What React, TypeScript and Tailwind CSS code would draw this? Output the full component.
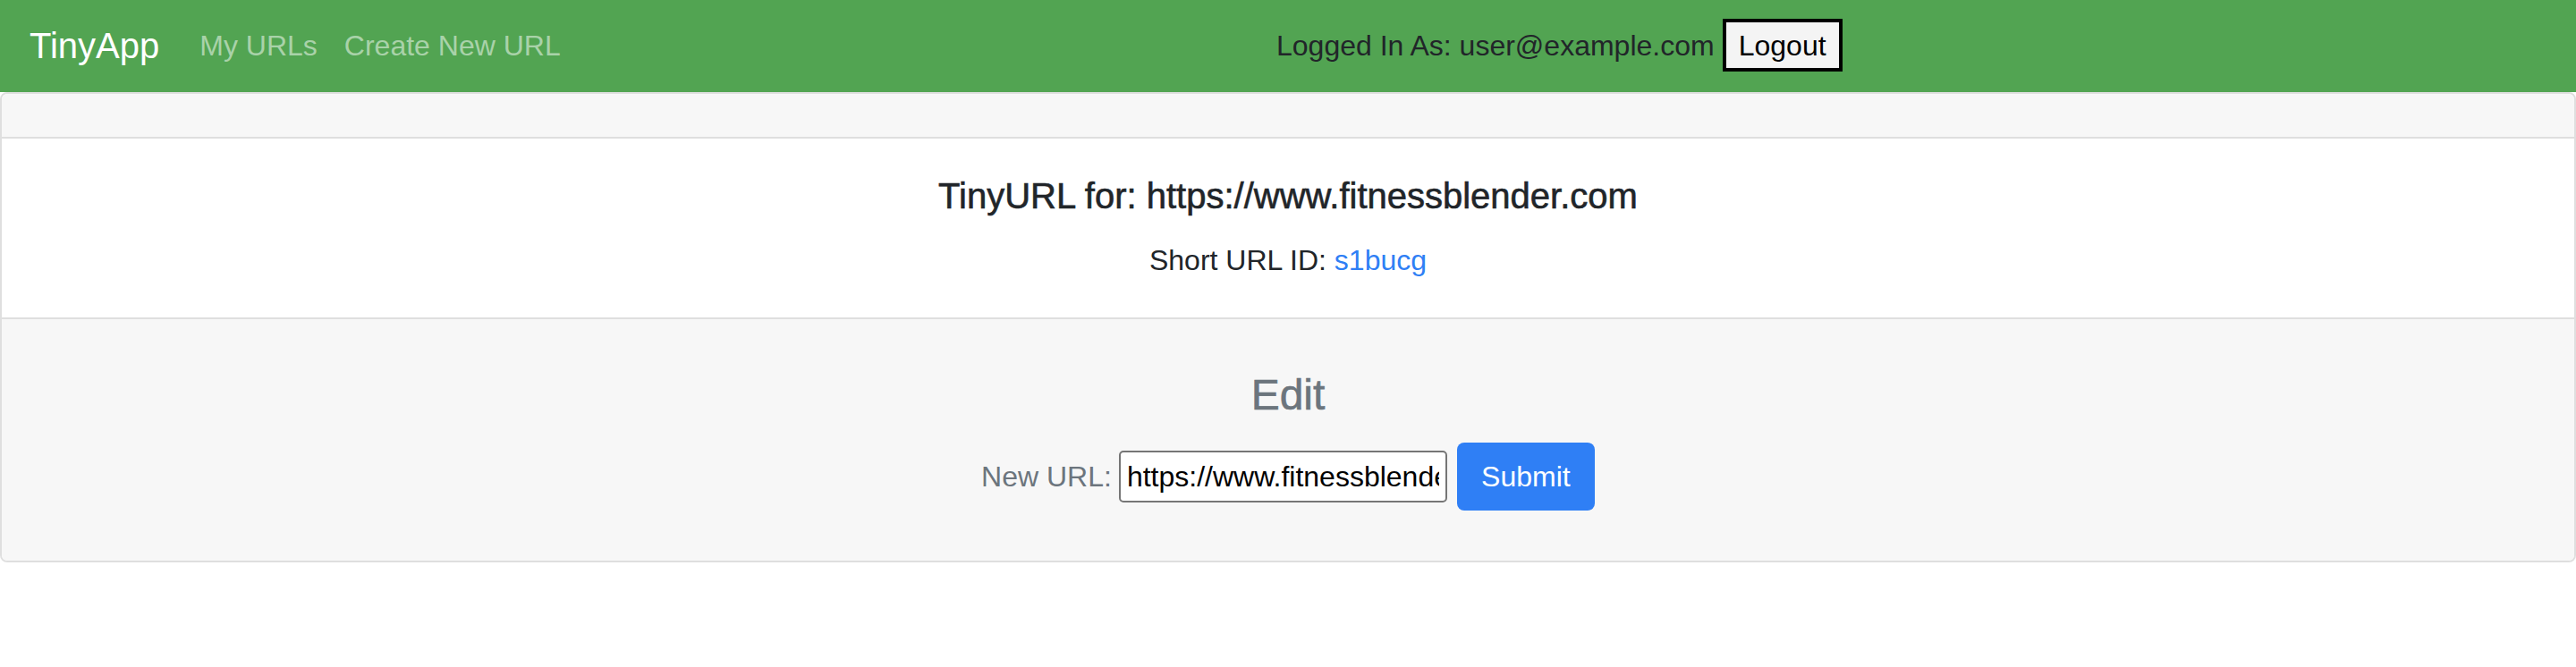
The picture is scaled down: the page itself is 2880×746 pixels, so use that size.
import React, { useState } from 'react';

const font = { fontFamily: '"Liberation Sans", Arial, sans-serif' };

const Navbar: React.FC<{ email: string }> = ({ email }) => (
  <nav className="flex h-[103px] items-center bg-[#52a452] px-[33px] pb-[2px]">
    <div className="flex w-[1394px] items-center">
      <a href="#" className="mr-[45px] text-[40px] leading-[48px] text-white">TinyApp</a>
      <a href="#" className="mr-[30px] text-[32px] leading-[48px] text-[#a9d2a9]">My URLs</a>
      <a href="#" className="text-[32px] leading-[48px] text-[#a9d2a9]">Create New URL</a>
    </div>
    <div className="flex items-center">
      <span className="mr-[9px] text-[32px] leading-[48px] text-[#212529]">Logged In As: {email}</span>
      <button className="h-[59px] w-[134px] border-[4px] border-black bg-[#f4f4f4] text-[32px] leading-none text-black">
        Logout
      </button>
    </div>
  </nav>
);

export default function App() {
  const [longUrl, setLongUrl] = useState('https://www.fitnessblender.com');

  return (
    <div className="min-h-screen bg-white text-[#212529]" style={font}>
      <Navbar email="user@example.com" />

      <div className="rounded-[8px] border-2 border-[#dfdfdf] text-center">
        {/* empty header, same as the original page */}
        <div className="h-[50px] rounded-t-[6px] border-b-2 border-[#dfdfdf] bg-[#f7f7f7]" />

        <div className="px-[40px] py-[40px]">
          <h5 className="mb-[24px] text-[40px] leading-[48px] font-medium [-webkit-text-stroke:0.6px_currentColor]">
            TinyURL for: {longUrl}
          </h5>
          <p className="text-[32px] leading-[48px]">
            Short URL ID: <a href="#" className="text-[#2f7ff5]">s1bucg</a>
          </p>
        </div>

        <div className="rounded-b-[6px] border-t-2 border-[#dfdfdf] bg-[#f7f7f7] px-[40px] py-[56px]">
          <h4 className="mb-[24px] text-[48px] leading-[58px] font-medium text-[#6c757d] [-webkit-text-stroke:0.6px_currentColor]">Edit</h4>
          <form
            className="flex items-center justify-center"
            onSubmit={(e) => e.preventDefault()}
          >
            <label className="mr-[8px] text-[32px] leading-[48px] text-[#6c757d]">New URL:</label>
            <input
              type="text"
              className="mr-[11px] h-[58px] w-[367px] rounded-[5px] border-2 border-[#767676] bg-white px-[7px] text-[32px] text-black outline-none"
              value={longUrl}
              onChange={(e) => setLongUrl(e.target.value)}
            />
            <button
              type="submit"
              className="h-[76px] w-[154px] rounded-[8px] bg-[#2f7ff5] text-[32px] leading-[48px] text-white"
            >
              Submit
            </button>
          </form>
        </div>
      </div>
    </div>
  );
}
